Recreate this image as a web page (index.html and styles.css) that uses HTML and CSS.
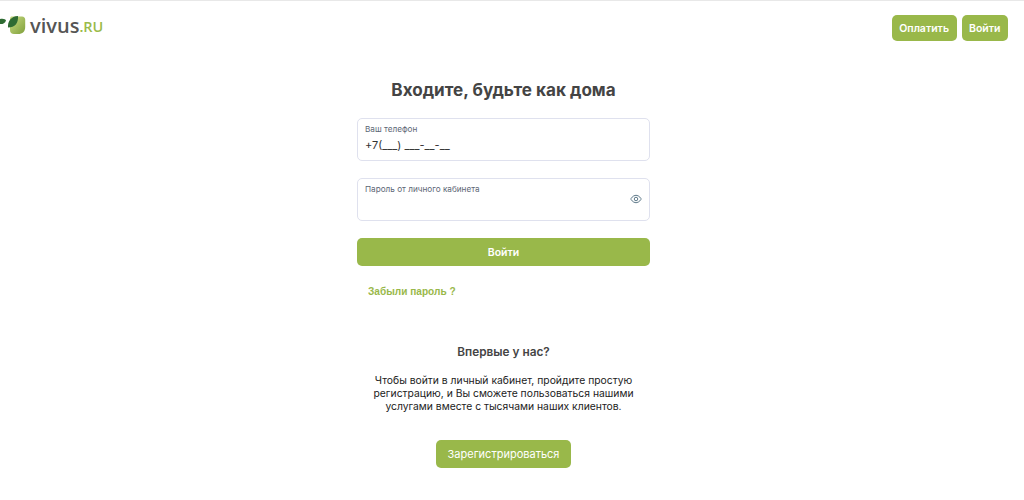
FILE: index.html
```html
<!doctype html>
<html>
<head>
    <meta charset="utf-8" />
    <title>Vivus</title>
    <link rel="stylesheet" href="styles.css">
</head>
<body>
<header class="header">
    <a class="logo" href="#">
        <svg class="logo__mark" width="26" height="20" viewBox="0 0 26 20">
            <defs>
                <linearGradient id="leaf" x1="0" y1="0" x2="1" y2="1">
                    <stop offset="0" stop-color="#c9dc84"/>
                    <stop offset="1" stop-color="#7f9f3a"/>
                </linearGradient>
            </defs>
            <path d="M11 1.500H22C24 1.500 25.200 2.800 25.200 4.800V12C25.200 16.500 22.500 19 18 19H14C11.500 19 10 17.500 10 15V3Z" fill="url(#leaf)"/>
            <path d="M0 4C3 3.200 5.500 4 6 5.500 5 8.500 2 9.500 0 9Z" fill="#2f6b33"/>
            <path d="M8 12.500C7.500 6 11 1.500 18 1C18.500 8 15 12.500 8 12.500Z" fill="#2f6b33"/>
        </svg>
        <span class="logo__name">vivus</span><span class="logo__zone">.RU</span>
    </a>
    <nav class="header__nav">
        <a class="btn btn--small" href="#">Оплатить</a>
        <a class="btn btn--small" href="#">Войти</a>
    </nav>
</header>

<main class="login">
    <h1 class="login__title">Входите, будьте как дома</h1>
    <form class="login__form">
        <div class="field">
            <div class="field__label">Ваш телефон</div>
            <div class="field__value">+7(___) ___-__-__</div>
        </div>
        <div class="field field--password">
            <div class="field__label">Пароль от личного кабинета</div>
            <svg class="field__eye" width="12" height="12" viewBox="0 0 24 24" fill="none" stroke="#5f7a8a" stroke-width="2">
                <path d="M1.500 12S5.500 4.500 12 4.500 22.500 12 22.500 12 18.500 19.500 12 19.500 1.500 12 1.500 12Z"/>
                <circle cx="12" cy="12" r="3.500"/>
            </svg>
        </div>
        <button class="btn btn--wide" type="button">Войти</button>
        <a class="login__forgot" href="#">Забыли пароль ?</a>
    </form>
    <h2 class="login__subtitle">Впервые у нас?</h2>
    <p class="login__text">Чтобы войти в личный кабинет, пройдите простую регистрацию, и Вы сможете пользоваться нашими услугами вместе с тысячами наших клиентов.</p>
    <a class="btn btn--register" href="#">Зарегистрироваться</a>
</main>
</body>
</html>
```

FILE: styles.css
```css
* {
    box-sizing: border-box;
}
body {
    margin: 0;
    height: 500px;
    overflow: hidden;
    background: #fff;
    border-top: 1px solid #e8e8e8;
    font-family: Inter, "Noto Sans", sans-serif;
    color: #444;
}
a {
    text-decoration: none;
}
.header {
    display: flex;
    justify-content: space-between;
    align-items: flex-start;
    height: 77px;
    padding: 14px 16px 0 0;
}
.logo {
    display: flex;
    align-items: center;
    height: 20px;
}
.logo__mark {
    margin-right: 4px;
}
.logo__name {
    font-family: "Open Sans", sans-serif;
    font-size: 20px;
    font-weight: 600;
    color: #555;
}
.logo__zone {
    font-family: "Open Sans", sans-serif;
    font-size: 14.500px;
    font-weight: 600;
    color: #9aba4a;
    margin-top: 2px;
}
.header__nav {
    display: flex;
    gap: 5px;
}
.btn {
    display: flex;
    justify-content: center;
    align-items: center;
    border: 0;
    border-radius: 5px;
    background: #99b84a;
    color: #fff;
    font-family: Inter, "Noto Sans", sans-serif;
}
.btn--small {
    height: 26px;
    padding: 0 7.500px;
    font-size: 10.500px;
    font-weight: 600;
}
.btn--wide {
    width: 293px;
    height: 28px;
    margin-top: 17px;
    font-size: 10.500px;
    font-weight: 600;
}
.btn--register {
    width: 135px;
    height: 28px;
    margin-top: 27px;
    font-size: 11px;
}
.login {
    display: flex;
    flex-direction: column;
    align-items: center;
    width: 293px;
    margin-left: 357px;
}
.login__title {
    margin: 0;
    font-size: 17.100px;
    line-height: 24px;
    font-weight: 700;
    white-space: nowrap;
}
.login__form {
    width: 293px;
    margin-top: 16px;
}
.field {
    position: relative;
    height: 43px;
    padding: 5px 7px 0;
    border: 1px solid #dfe1ee;
    border-radius: 5px;
}
.field--password {
    margin-top: 17px;
}
.field__label {
    font-size: 8.200px;
    line-height: 11px;
    color: #5c6675;
}
.field__value {
    margin-top: 1px;
    font-size: 11px;
    line-height: 18px;
    color: #333;
}
.field__eye {
    position: absolute;
    right: 7px;
    top: 14px;
}
.login__forgot {
    display: block;
    margin: 19px 0 0 11px;
    font-size: 10.100px;
    line-height: 14px;
    font-weight: 700;
    color: #99b84a;
    font-family: "Liberation Sans", sans-serif;
}
.login__subtitle {
    margin: 45px 0 0;
    font-size: 11.800px;
    line-height: 16px;
    font-weight: 600;
}
.login__text {
    margin: 14px 0 0;
    width: 293px;
    font-size: 10.350px;
    line-height: 13px;
    text-align: center;
    color: #222;
}
```
